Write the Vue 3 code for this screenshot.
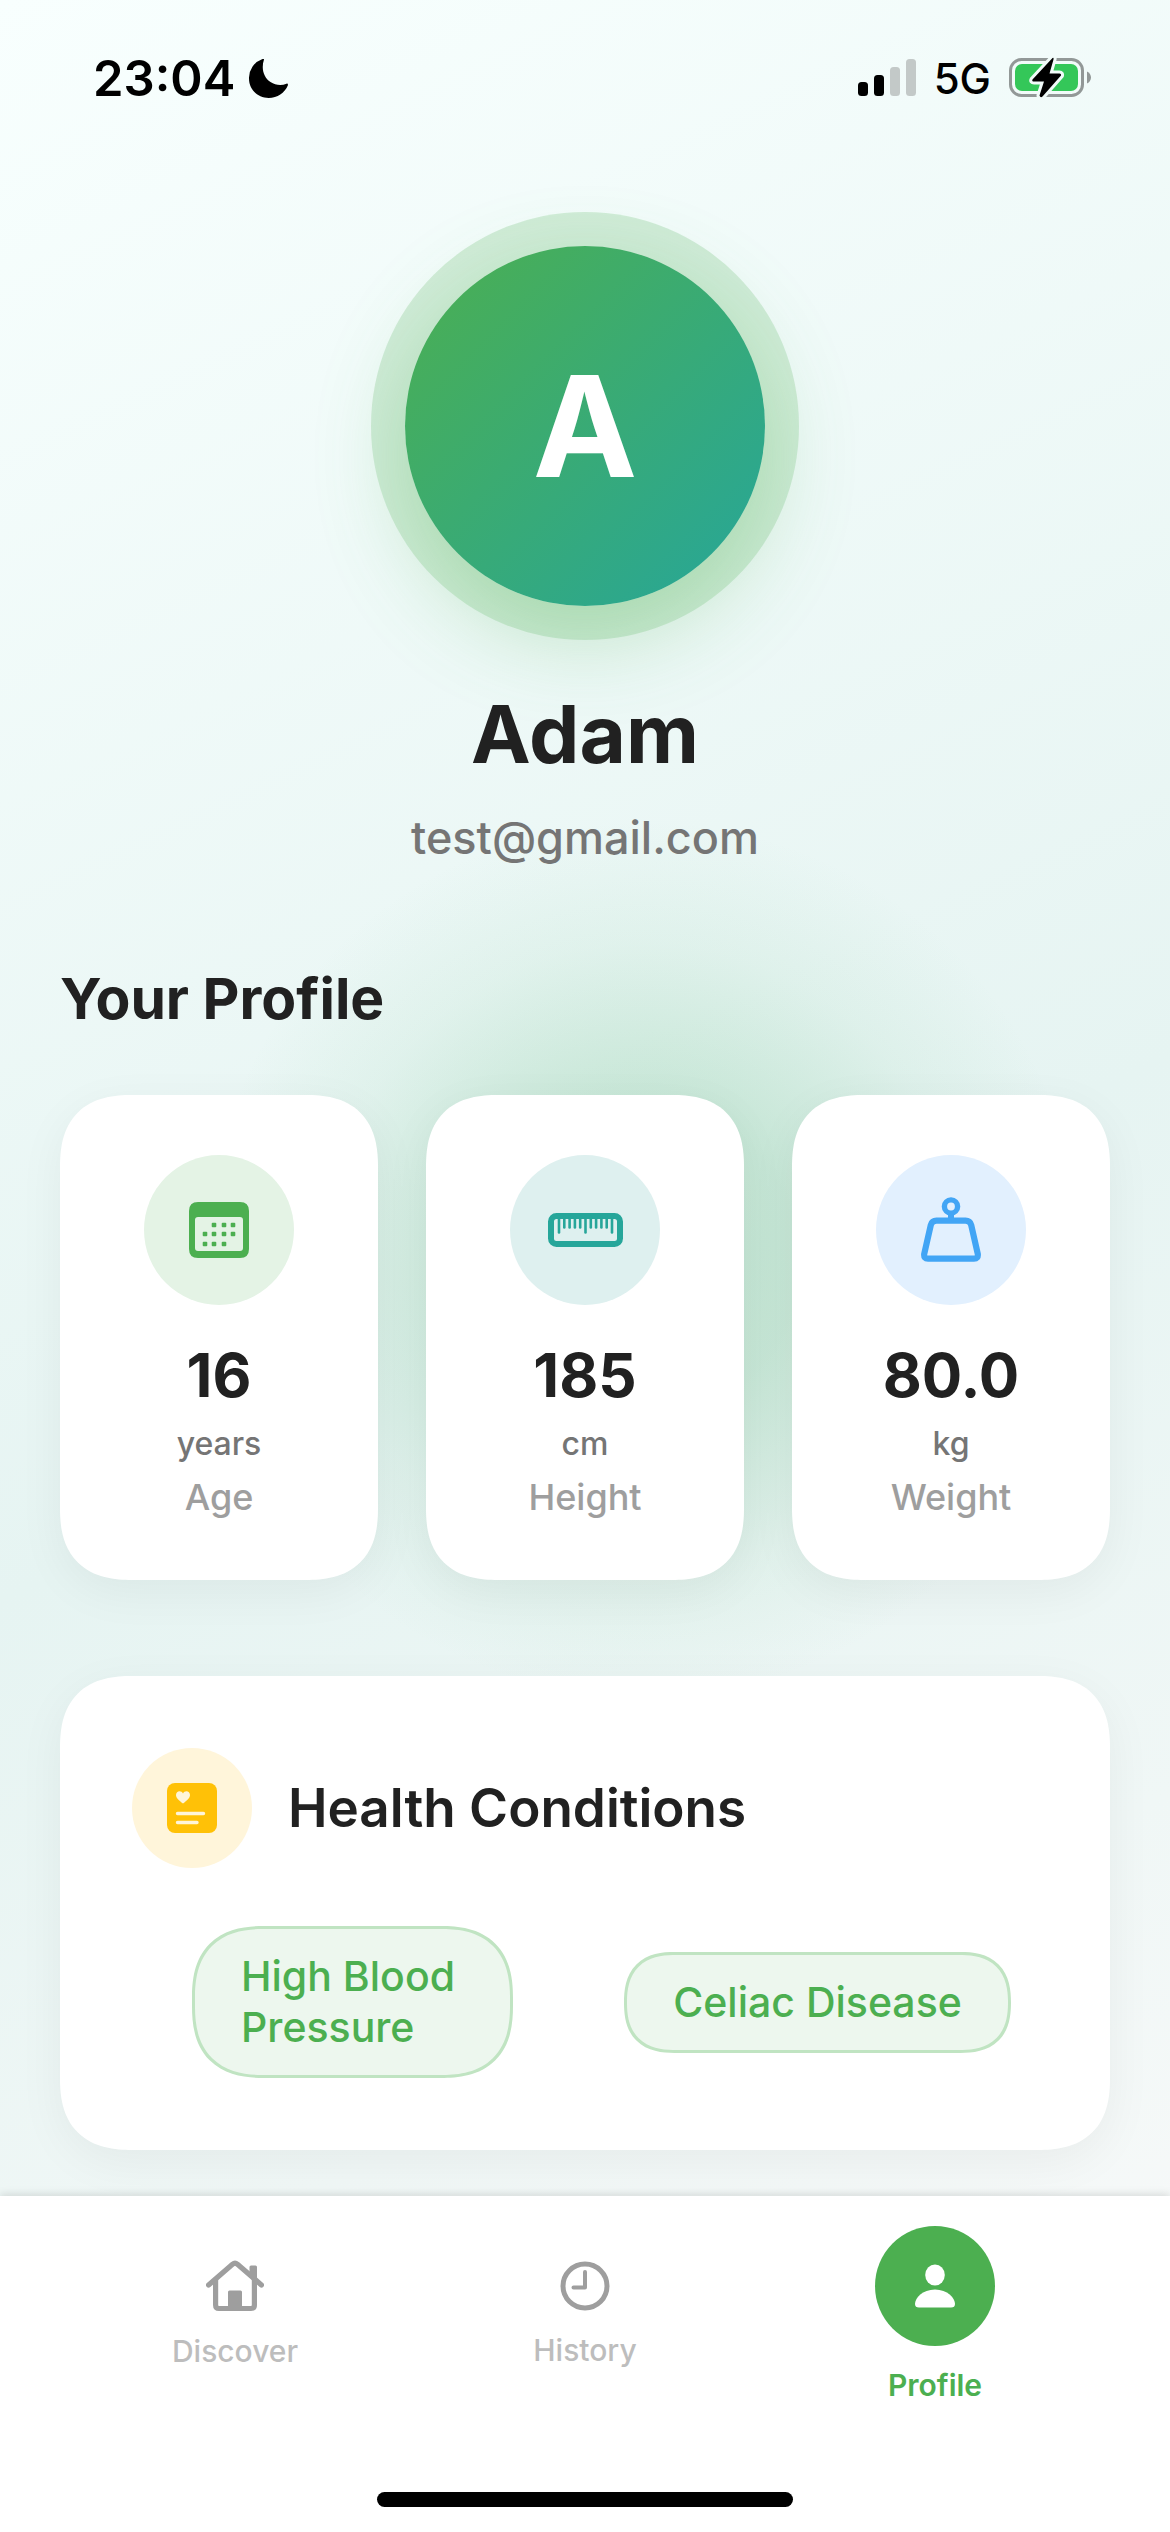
<script setup>
const user = { initial: 'A', name: 'Adam', email: 'test@gmail.com' }

const stats = [
  { icon: 'calendar', value: '16', unit: 'years', label: 'Age' },
  { icon: 'ruler', value: '185', unit: 'cm', label: 'Height' },
  { icon: 'weight', value: '80.0', unit: 'kg', label: 'Weight' },
]

const conditions = ['High Blood\nPressure', 'Celiac Disease']

const dots = [
  [25, 23], [35, 23], [44, 23],
  [16, 32], [25, 32], [35, 32], [44, 32],
  [16, 42], [25, 42], [35, 42],
]

const ticks = Array.from({ length: 11 }, (_, i) => ({
  x: 11 + i * 5.3,
  y: i % 5 === 0 ? 19.5 : 14.5,
}))
</script>

<template>
  <div class="screen">
    <header class="status">
      <div class="clock">
        <span class="time">23:04</span>
        <svg width="39" height="39" viewBox="0 0 39 39" aria-hidden="true">
          <path d="M15 .6C15.300-.2 14-.1 13 .3A20 20 0 0 0 0 19.500C0 30.500 8.700 39 19.700 39C28.500 39 35.600 34 38.800 26.500C39.300 25 38.500 24.300 37.500 24.700C32.500 26.700 26.500 26.300 21.500 23C14.500 18.500 12 9.500 15 .6Z" />
        </svg>
      </div>
      <div class="signals">
        <svg width="58" height="38" viewBox="0 0 58 38" aria-hidden="true">
          <rect y="23" width="10" height="14" rx="3.500" />
          <rect x="16" y="16" width="10" height="21" rx="3.500" />
          <rect x="32" y="8" width="10" height="29" rx="3.500" fill="#c3c9c8" />
          <rect x="48" y="0" width="10" height="37" rx="3.500" fill="#c3c9c8" />
        </svg>
        <span class="network">5G</span>
        <svg width="84" height="42" viewBox="0 0 84 42" aria-hidden="true">
          <rect x="1.500" y="2.500" width="72" height="36" rx="11" fill="none" stroke="#929897" stroke-width="3" />
          <rect x="6" y="7" width="63" height="27" rx="7" fill="#34c759" />
          <path d="M78 14.500C80.500 15.500 82 18 82 20.500S80.500 25.500 78 26.500Z" fill="#929897" />
          <path d="M43.500 1L23.500 22.500Q22.500 24.500 25 24.500H35L30.500 38.500Q31.500 41.500 33.500 39.500L52 18.500Q52.500 16.500 50.500 16.500H40.500L44.500 2.500Q45 0 43.500 1Z" stroke="#f1fbf9" stroke-width="6" paint-order="stroke" stroke-linejoin="round" />
        </svg>
      </div>
    </header>

    <main class="content">
      <section class="identity">
        <div class="avatar">
          <div class="avatar-face">{{ user.initial }}</div>
        </div>
        <h1 class="name">{{ user.name }}</h1>
        <p class="email">{{ user.email }}</p>
      </section>

      <h2 class="section-title">Your Profile</h2>

      <section class="stats">
        <article v-for="s in stats" :key="s.label" class="card stat">
          <div class="stat-icon" :class="s.icon">
            <svg v-if="s.icon === 'calendar'" width="60" height="56" viewBox="0 0 60 56" fill="#4caf50" aria-hidden="true">
              <path fill-rule="evenodd" d="M9 0H51Q60 0 60 9V47Q60 56 51 56H9Q0 56 0 47V9Q0 0 9 0ZM9 15Q6 15 6 18V46Q6 49 9 49H51Q54 49 54 46V18Q54 15 51 15Z" />
              <rect v-for="(d, i) in dots" :key="i" :x="d[0] - 2.3" :y="d[1] - 2.3" width="4.600" height="4.600" rx="1" />
            </svg>
            <svg v-else-if="s.icon === 'ruler'" width="75" height="34" viewBox="0 0 75 34" fill="none" stroke="#26a69a" aria-hidden="true">
              <rect x="3" y="3" width="69" height="28" rx="5.500" stroke-width="6" />
              <line v-for="(t, i) in ticks" :key="i" :x1="t.x" y1="4" :x2="t.x" :y2="t.y" stroke-width="2.600" stroke-linecap="round" />
            </svg>
            <svg v-else width="60" height="66" viewBox="0 0 60 66" fill="none" stroke="#42a5f5" aria-hidden="true">
              <circle cx="30" cy="9.500" r="6.600" stroke-width="5.400" />
              <path d="M30 17V22" stroke-width="6" />
              <path d="M15.500 23.700H44.500Q49 23.700 50.200 28L56.800 57Q57.300 61.700 53 61.700H7Q2.700 61.700 3.200 57L9.800 28Q11 23.700 15.500 23.700Z" stroke-width="6.200" />
            </svg>
          </div>
          <strong class="stat-value">{{ s.value }}</strong>
          <span class="stat-unit">{{ s.unit }}</span>
          <span class="stat-label">{{ s.label }}</span>
        </article>
      </section>

      <section class="card health">
        <div class="health-head">
          <div class="health-icon">
            <svg width="50" height="50" viewBox="0 0 50 50" aria-hidden="true">
              <rect width="50" height="50" rx="8" fill="#ffc107" />
              <path d="M16 20.500C12 17.500 9 15 9 12C9 7.500 14.500 7 16 10.500C17.500 7 23 7.500 23 12C23 15 20 17.500 16 20.500Z" fill="#fff5da" />
              <path d="M10.500 30.500H36.500M10.500 39.500H30" stroke="#fff5da" stroke-width="3.400" stroke-linecap="round" />
            </svg>
          </div>
          <h2 class="health-title">Health Conditions</h2>
        </div>
        <ul class="chips">
          <li v-for="c in conditions" :key="c" class="chip">{{ c }}</li>
        </ul>
      </section>
    </main>

    <nav class="tabs">
      <div class="tab-row">
        <a href="#discover" class="tab">
          <svg width="58" height="52" viewBox="0 0 58 52" fill="none" stroke="#9e9e9e" aria-hidden="true">
            <path d="M2.600 25L26.500 4.200Q29 2.200 31.500 4.200L55.400 25" stroke-width="5.200" stroke-linecap="round" />
            <path d="M9.600 19V45Q9.600 48.500 13 48.500H45Q48.400 48.500 48.400 45V19" stroke-width="5.200" />
            <path d="M43.500 17V7Q43.500 5.500 45 5.500H49.500Q51 5.500 51 7V24ZM22 50V32Q22 30.500 23.500 30.500H34.500Q36 30.500 36 32V50Z" fill="#9e9e9e" stroke="none" />
          </svg>
          <span>Discover</span>
        </a>
        <a href="#history" class="tab">
          <svg width="50" height="50" viewBox="0 0 50 50" fill="none" stroke="#9e9e9e" aria-hidden="true">
            <circle cx="25" cy="25" r="22" stroke-width="5" />
            <path d="M25 11V26.500H13.500" stroke-width="4" stroke-linecap="round" stroke-linejoin="round" />
          </svg>
          <span>History</span>
        </a>
        <a href="#profile" class="tab active" aria-current="page">
          <div class="tab-badge">
            <svg width="40" height="44" viewBox="0 0 40 44" fill="#fff" aria-hidden="true">
              <ellipse cx="20" cy="11" rx="9.800" ry="10.500" />
              <path d="M4 43.500Q0 43.500 0 40C0 34 7.500 25.500 20 25.500S40 34 40 40Q40 43.500 36 43.500Z" />
            </svg>
          </div>
          <span>Profile</span>
        </a>
      </div>
      <div class="home-indicator"></div>
    </nav>
  </div>
</template>

<style>
body {
  margin: 0;
}
</style>

<style scoped>
.screen {
  min-height: 100vh;
  display: flex;
  flex-direction: column;
  font-family: Inter, "Liberation Sans", sans-serif;
  color: #212121;
  background:
    radial-gradient(circle 440px at 55% 1260px, rgba(102, 187, 130, 0.3), rgba(102, 187, 130, 0.26) 35%, rgba(102, 187, 130, 0.08) 72%, rgba(102, 187, 130, 0)),
    linear-gradient(155deg, #f8fffe, #e6f4f2 52%, #fafafa);
}

h1,
h2,
p,
ul {
  margin: 0;
  padding: 0;
}

.status {
  display: flex;
  justify-content: space-between;
  align-items: center;
  height: 78px;
  padding: 39px 77px 0 93px;
  color: #000;
}

.clock,
.signals {
  display: flex;
  align-items: center;
}

.clock {
  gap: 14px;
}

.signals {
  gap: 18px;
}

.time {
  font-size: 49px;
  font-weight: 600;
}

.network {
  font-size: 42px;
  font-weight: 500;
}

.content {
  padding: 95px 60px 46px;
}

.identity {
  display: flex;
  flex-direction: column;
  align-items: center;
}

.avatar {
  padding: 34px;
  border-radius: 50%;
  background: rgba(76, 175, 80, 0.2);
}

.avatar-face {
  display: flex;
  align-items: center;
  justify-content: center;
  width: 360px;
  height: 360px;
  border-radius: 50%;
  background: linear-gradient(135deg, #4caf50, #26a69a);
  box-shadow: 0 30px 90px rgba(76, 175, 80, 0.3);
  color: #fff;
  font-size: 140px;
  font-weight: 700;
}

.name {
  margin-top: 44px;
  font-size: 80px;
  line-height: 100px;
  font-weight: 700;
}

.email {
  margin-top: 24px;
  color: #757575;
  font-size: 45px;
  line-height: 60px;
  font-weight: 500;
}

.section-title {
  margin-top: 95px;
  font-size: 57px;
  line-height: 72px;
  font-weight: 700;
}

.stats {
  display: grid;
  grid-template-columns: repeat(3, 1fr);
  gap: 48px;
  margin-top: 60px;
}

.card {
  background: #fff;
  border-radius: 60px;
  box-shadow: 0 12px 48px rgba(0, 0, 0, 0.05);
}

.stat {
  display: flex;
  flex-direction: column;
  align-items: center;
  padding: 60px 0 61px;
}

.stat-icon {
  display: flex;
  align-items: center;
  justify-content: center;
  width: 150px;
  height: 150px;
  margin-bottom: 34px;
  border-radius: 50%;
}

.stat-icon.calendar {
  background: #e4f3e5;
}

.stat-icon.ruler {
  background: #def0ef;
}

.stat-icon.weight {
  background: #e2f0fe;
}

.stat-value {
  font-size: 60px;
  line-height: 72px;
  font-weight: 700;
}

.stat-unit {
  margin-top: 12px;
  color: #757575;
  font-size: 32px;
  line-height: 42px;
  font-weight: 500;
}

.stat-label {
  margin-top: 10px;
  color: #9e9e9e;
  font-size: 36px;
  line-height: 44px;
  font-weight: 500;
}

.health {
  margin-top: 96px;
  padding: 72px;
}

.health-head {
  display: flex;
  align-items: center;
  gap: 36px;
}

.health-icon {
  display: flex;
  align-items: center;
  justify-content: center;
  width: 120px;
  height: 120px;
  border-radius: 50%;
  background: #fff5da;
}

.health-title {
  font-size: 53px;
  line-height: 64px;
  font-weight: 600;
}

.chips {
  display: grid;
  grid-template-columns: 1fr 1fr;
  gap: 24px;
  align-items: center;
  justify-items: center;
  margin-top: 58px;
  list-style: none;
}

.chip {
  box-sizing: border-box;
  min-width: 321px;
  padding: 22px 46px;
  border: 3px solid #c0e4c2;
  border-radius: 60px;
  background: #edf7ee;
  color: #4caf50;
  font-size: 41px;
  line-height: 51px;
  font-weight: 500;
  white-space: pre-line;
}

@supports (corner-shape: superellipse(1.3)) {
  .card,
  .chip {
    border-radius: 72px;
    corner-shape: superellipse(1.3);
  }
}

.tabs {
  margin-top: auto;
  background: #fff;
  box-shadow: 0 -2px 8px rgba(0, 0, 0, 0.12);
}

.tab-row {
  display: grid;
  grid-template-columns: repeat(3, 1fr);
  align-items: center;
  height: 214px;
  padding: 12px 60px 0;
}

.tab {
  display: flex;
  flex-direction: column;
  align-items: center;
  gap: 20px;
  color: #bdbdbd;
  font-size: 30px;
  line-height: 38px;
  font-weight: 500;
  text-decoration: none;
}

.tab.active {
  color: #4caf50;
  font-weight: 600;
}

.tab-badge {
  display: flex;
  align-items: center;
  justify-content: center;
  width: 120px;
  height: 120px;
  border-radius: 50%;
  background: #4caf50;
}

.home-indicator {
  width: 416px;
  height: 15px;
  margin: 70px auto 25px;
  border-radius: 8px;
  background: #000;
}
</style>
